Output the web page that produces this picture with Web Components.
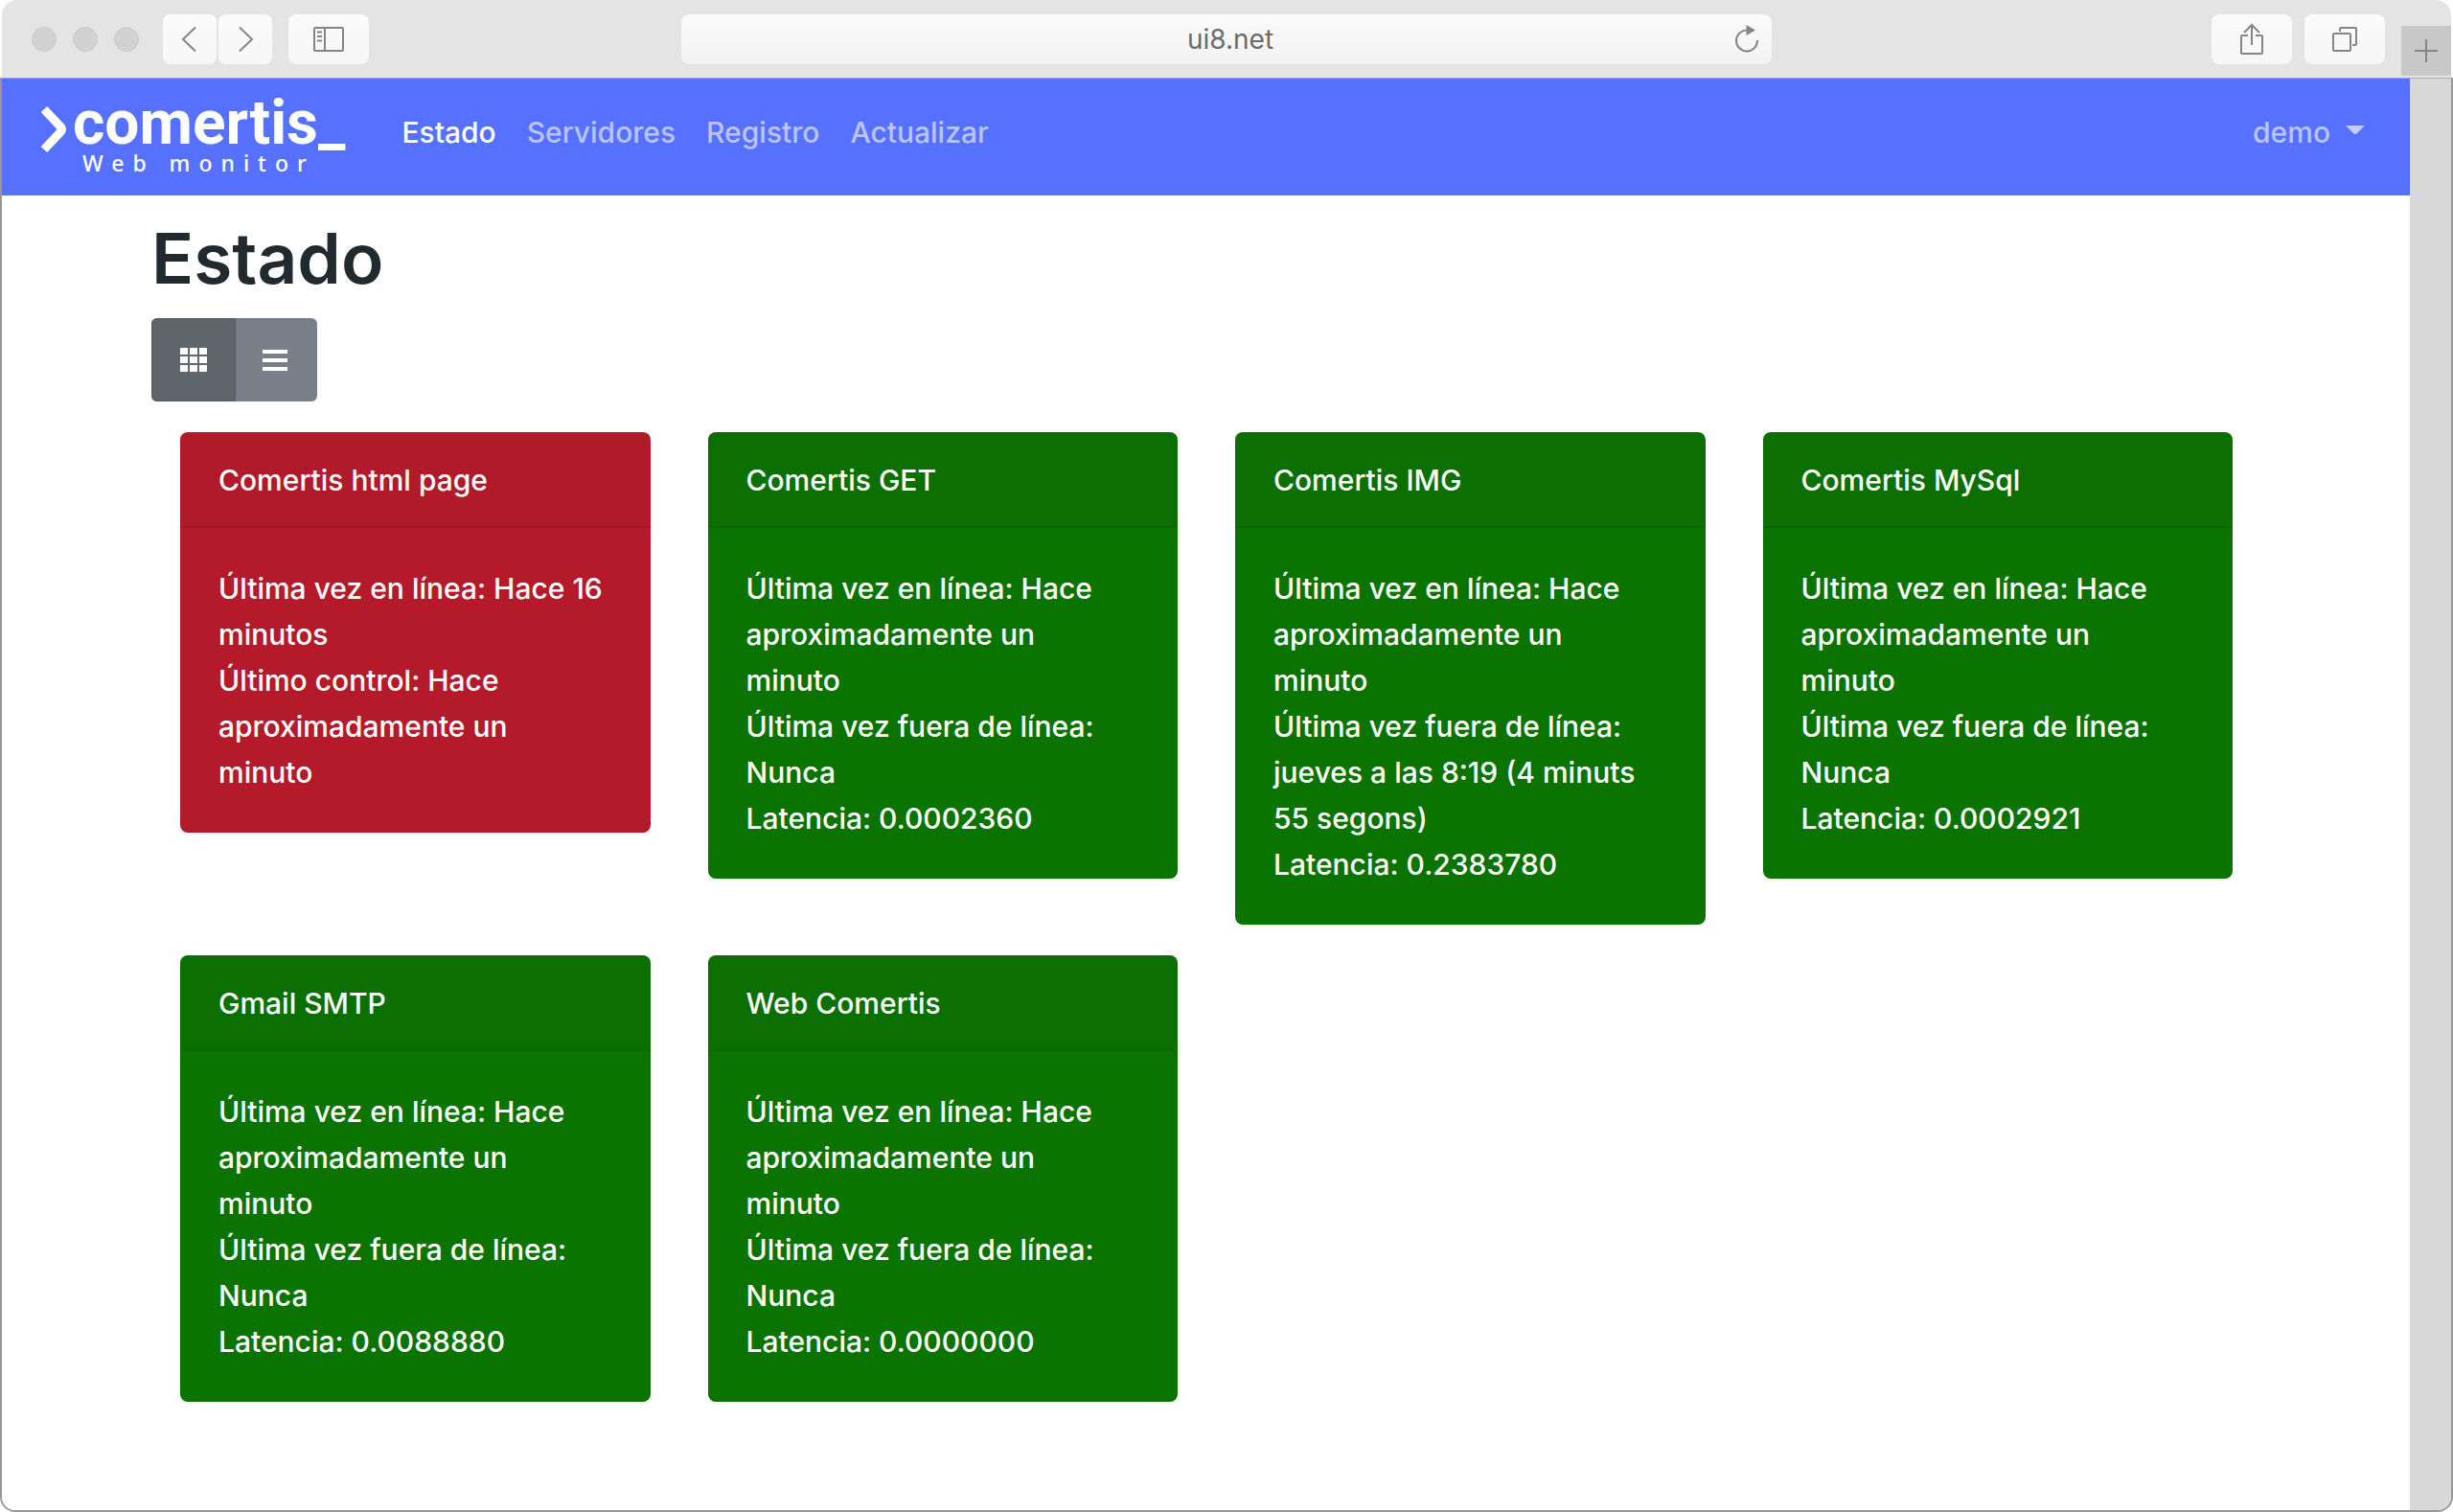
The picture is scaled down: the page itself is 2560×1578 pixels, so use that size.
<!DOCTYPE html>
<html lang="es">
<head>
<meta charset="utf-8">
<title>Comertis Web monitor</title>
<style>
  html { background: #fff; }
  body { margin: 0; font: 500 30px/48px Inter, "Liberation Sans", sans-serif; color: #212b2f; }
</style>
</head>
<body>
<browser-window>
  <browser-toolbar slot="toolbar" address="ui8.net"></browser-toolbar>
  <site-nav>
    <site-logo slot="brand"></site-logo>
    <nav-link current>Estado</nav-link>
    <nav-link>Servidores</nav-link>
    <nav-link>Registro</nav-link>
    <nav-link>Actualizar</nav-link>
    <user-menu slot="user">demo</user-menu>
  </site-nav>
  <status-page heading="Estado">
    <view-toggle slot="tools"></view-toggle>
    <status-card state="down" name="Comertis html page">
      <div>Última vez en línea: Hace 16 minutos</div>
      <div>Último control: Hace aproximadamente un<br>minuto</div>
    </status-card>
    <status-card name="Comertis GET">
      <div>Última vez en línea: Hace aproximadamente un<br>minuto</div>
      <div>Última vez fuera de línea: Nunca</div>
      <div>Latencia: 0.0002360</div>
    </status-card>
    <status-card name="Comertis IMG">
      <div>Última vez en línea: Hace aproximadamente un<br>minuto</div>
      <div>Última vez fuera de línea: jueves a las 8:19 (4 minuts 55 segons)</div>
      <div>Latencia: 0.2383780</div>
    </status-card>
    <status-card name="Comertis MySql">
      <div>Última vez en línea: Hace aproximadamente un<br>minuto</div>
      <div>Última vez fuera de línea: Nunca</div>
      <div>Latencia: 0.0002921</div>
    </status-card>
    <status-card name="Gmail SMTP">
      <div>Última vez en línea: Hace aproximadamente un<br>minuto</div>
      <div>Última vez fuera de línea: Nunca</div>
      <div>Latencia: 0.0088880</div>
    </status-card>
    <status-card name="Web Comertis">
      <div>Última vez en línea: Hace aproximadamente un<br>minuto</div>
      <div>Última vez fuera de línea: Nunca</div>
      <div>Latencia: 0.0000000</div>
    </status-card>
  </status-page>
</browser-window>

<script>
const define = (name, render) => customElements.define(name, class extends HTMLElement {
  connectedCallback() {
    if (this.shadowRoot) return;
    this.attachShadow({ mode: 'open' }).innerHTML = render(this);
  }
});

define('browser-window', () => `
  <style>
    :host { display: flex; flex-direction: column; min-height: 100vh; box-sizing: border-box; }
    .frame { flex: 1; display: flex; border: 2px solid #979797; border-top-color: #a9abb8; border-top-width: 1px;
      border-radius: 0 0 16px 16px; overflow: hidden; }
    .page { flex: 1; min-width: 0; background: #fff; }
    .gutter { width: 43px; background: #d8d8d8; }
  </style>
  <slot name="toolbar"></slot>
  <div class="frame"><div class="page"><slot></slot></div><div class="gutter"></div></div>`);

define('browser-toolbar', el => `
  <style>
    :host { display: grid; grid-template-columns: 1fr 44.5% 1fr; align-items: center; height: 81px;
      background: #e4e4e4; border-radius: 16px 16px 0 0; margin: 0 2px; }
    .side { display: flex; align-items: center; height: 100%; }
    .left { padding-left: 31px; }
    .right { justify-content: flex-end; }
    .dots { display: flex; gap: 17px; margin-right: 25px; }
    .dots i { width: 26px; height: 26px; box-sizing: border-box; border-radius: 50%; background: #d2d2d2; border: 1px solid #cacaca; }
    button { border: 0; padding: 0; margin: 0; height: 52px; border-radius: 8px; background: linear-gradient(#fbfbfb, #f6f6f6);
      display: flex; align-items: center; justify-content: center; color: #858585; width: 84px; }
    .nav { display: flex; gap: 2px; margin-right: 17px; }
    .nav button { width: 56px; }
    svg { display: block; fill: none; stroke: currentColor; stroke-width: 2; }
    .bar { display: flex; align-items: center; height: 52px; border-radius: 8px; background: linear-gradient(#fbfbfb, #f2f2f2); }
    input { flex: 1; min-width: 0; border: 0; background: none; padding: 0 0 0 60px; text-align: center; color: #6b6b6b;
      font: 400 28px/48px Inter, "Liberation Sans", sans-serif; outline: 0; }
    .bar button { width: 52px; background: none; }
    .share { margin-right: 13px; }
    button.tab { width: 52px; align-self: flex-end; background: #c8c8c8; border-radius: 0; margin: 0 0 2px 17px; }
  </style>
  <div class="side left">
    <div class="dots"><i></i><i></i><i></i></div>
    <div class="nav">
      <button aria-label="Atrás"><svg width="30" height="30" viewBox="0 0 30 30"><path d="M21 2.500 8 15l13 12.500"/></svg></button>
      <button aria-label="Adelante"><svg width="30" height="30" viewBox="0 0 30 30"><path d="M9 2.500 22 15 9 27.500"/></svg></button>
    </div>
    <button aria-label="Barra lateral"><svg width="32" height="26" viewBox="0 0 32 26"><rect x="1" y="1" width="30" height="24" rx="1"/><path d="M12 1v24M4 5.500h5M4 10h5M4 14.500h5"/></svg></button>
  </div>
  <div class="bar">
    <input type="text" aria-label="Dirección" value="${el.getAttribute('address')}">
    <button aria-label="Recargar"><svg width="28" height="32" viewBox="0 0 28 32"><path d="M15 6.500A11 11 0 1 0 25 17"/><path d="M13.500 1v11l9.500-5.500z" fill="currentColor" stroke="none"/></svg></button>
  </div>
  <div class="side right">
    <button class="share" aria-label="Compartir"><svg width="26" height="34" viewBox="0 0 26 34"><path d="M9 13H3q-1 0-1 1v17q0 1 1 1h20q1 0 1-1V14q0-1-1-1h-6M13 23V2M5 10l8-8 8 8"/></svg></button>
    <button aria-label="Pestañas"><svg width="28" height="28" viewBox="0 0 28 28"><rect x="2" y="8" width="18" height="18" rx="1"/><path d="M9 6V3q0-1 1-1h15q1 0 1 1v16q0 1-1 1h-3"/></svg></button>
    <button class="tab" aria-label="Nueva pestaña"><svg width="26" height="26" viewBox="0 0 26 26"><path d="M13 1v24M1 13h24"/></svg></button>
  </div>`);

define('site-nav', () => `
  <style>
    :host { display: flex; align-items: center; height: 122px; padding: 0 40px; background: #5670ff; }
    nav { display: flex; flex: 1; padding: 0 0 10px 43px; }
    .user { padding-bottom: 10px; }
  </style>
  <slot name="brand"></slot><nav><slot></slot></nav><div class="user"><slot name="user"></slot></div>`);

define('site-logo', () => `
  <style>
    :host { display: block; }
    a { display: flex; gap: 6px; text-decoration: none; color: #fff; align-items: center; }
    svg { display: block; fill: none; stroke: #fff; stroke-width: 9; margin-bottom: 16px; }
    .text { display: flex; flex-direction: column; }
    .name { font: 700 64px/54px Roboto, sans-serif; }
    .tag { font: 500 23px/28px "Noto Sans", sans-serif; letter-spacing: 9px; padding-left: 10px; }
  </style>
  <a href="#"><svg width="28" height="50" viewBox="0 0 28 50"><path d="M4 4 21 22q3 3 0 6L4 46"/></svg>
    <span class="text"><span class="name">comertis_</span><span class="tag">Web monitor</span></span></a>`);

define('nav-link', el => `
  <style>
    :host { display: block; }
    a { display: block; padding: 0 16px; text-decoration: none; color: rgba(255,255,255,.6); }
    a[aria-current] { color: #fff; }
  </style>
  <a href="#"${el.hasAttribute('current') ? ' aria-current="page"' : ''}><slot></slot></a>`);

define('user-menu', () => `
  <style>
    :host { display: block; }
    button { border: 0; background: none; padding: 0 7px; font: inherit; color: rgba(255,255,255,.6);
      display: flex; align-items: center; gap: 16px; }
    svg { display: block; fill: #c5ceff; margin-bottom: 4px; }
  </style>
  <button aria-haspopup="menu"><slot></slot><svg width="20" height="10" viewBox="0 0 20 10"><path d="M0 0h20L12 8q-2 2-4 0z"/></svg></button>`);

define('status-page', el => `
  <style>
    :host { display: block; padding: 18px 155px 64px 156px; }
    h1 { margin: 0 0 14px; font-size: 73px; line-height: 96px; font-weight: 600; }
    .cards { display: grid; grid-template-columns: repeat(4, 1fr); gap: 32px 60px; align-items: start; padding: 32px 30px 0; }
  </style>
  <h1>${el.getAttribute('heading')}</h1>
  <slot name="tools"></slot>
  <div class="cards"><slot></slot></div>`);

define('view-toggle', () => `
  <style>
    :host { display: flex; }
    .group { display: flex; border-radius: 6px; overflow: hidden; }
    button { box-sizing: border-box; border: 0; margin: 0; padding: 0 4px 0 0; width: 85px; height: 87px; background: #787f88; display: flex; align-items: center; justify-content: center; }
    button[aria-pressed=true] { width: 88px; padding: 0; background: #5f676c; box-shadow: inset 0 0 0 2px #596166; }
    svg { display: block; fill: #fff; }
  </style>
  <div class="group" role="group" aria-label="Vista">
    <button aria-label="Cuadrícula" aria-pressed="true"><svg width="28" height="26" viewBox="0 0 28 26">
      <path d="M0 1q0-1 1-1h7v7H0zM10 0h8v7h-8zM20 0h7q1 0 1 1v6h-8zM0 9h8v7H0zM10 9h8v7h-8zM20 9h8v7h-8zM0 18h8v7H1q-1 0-1-1zM10 18h8v7h-8zM20 18h8v6q0 1-1 1h-7z"/></svg></button>
    <button aria-label="Lista" aria-pressed="false"><svg width="26" height="24" viewBox="0 0 26 24">
      <path d="M0 1h26v4H0zM0 10h26v4H0zM0 19h26v4H0z"/></svg></button>
  </div>`);

define('status-card', el => `
  <style>
    :host { display: block; border-radius: 8px; overflow: hidden; background: #0b7300; color: #fff; }
    :host([state=down]) { background: #b51a2b; }
    h2 { margin: 0; padding: 26px 40px 24px; font-size: inherit; font-weight: inherit; background: rgba(32,32,32,.03); border-bottom: 2px solid rgba(0,0,0,.08); }
    .body { padding: 39px 40px; }
  </style>
  <h2>${el.getAttribute('name')}</h2>
  <div class="body"><slot></slot></div>`);
</script>
</body>
</html>
